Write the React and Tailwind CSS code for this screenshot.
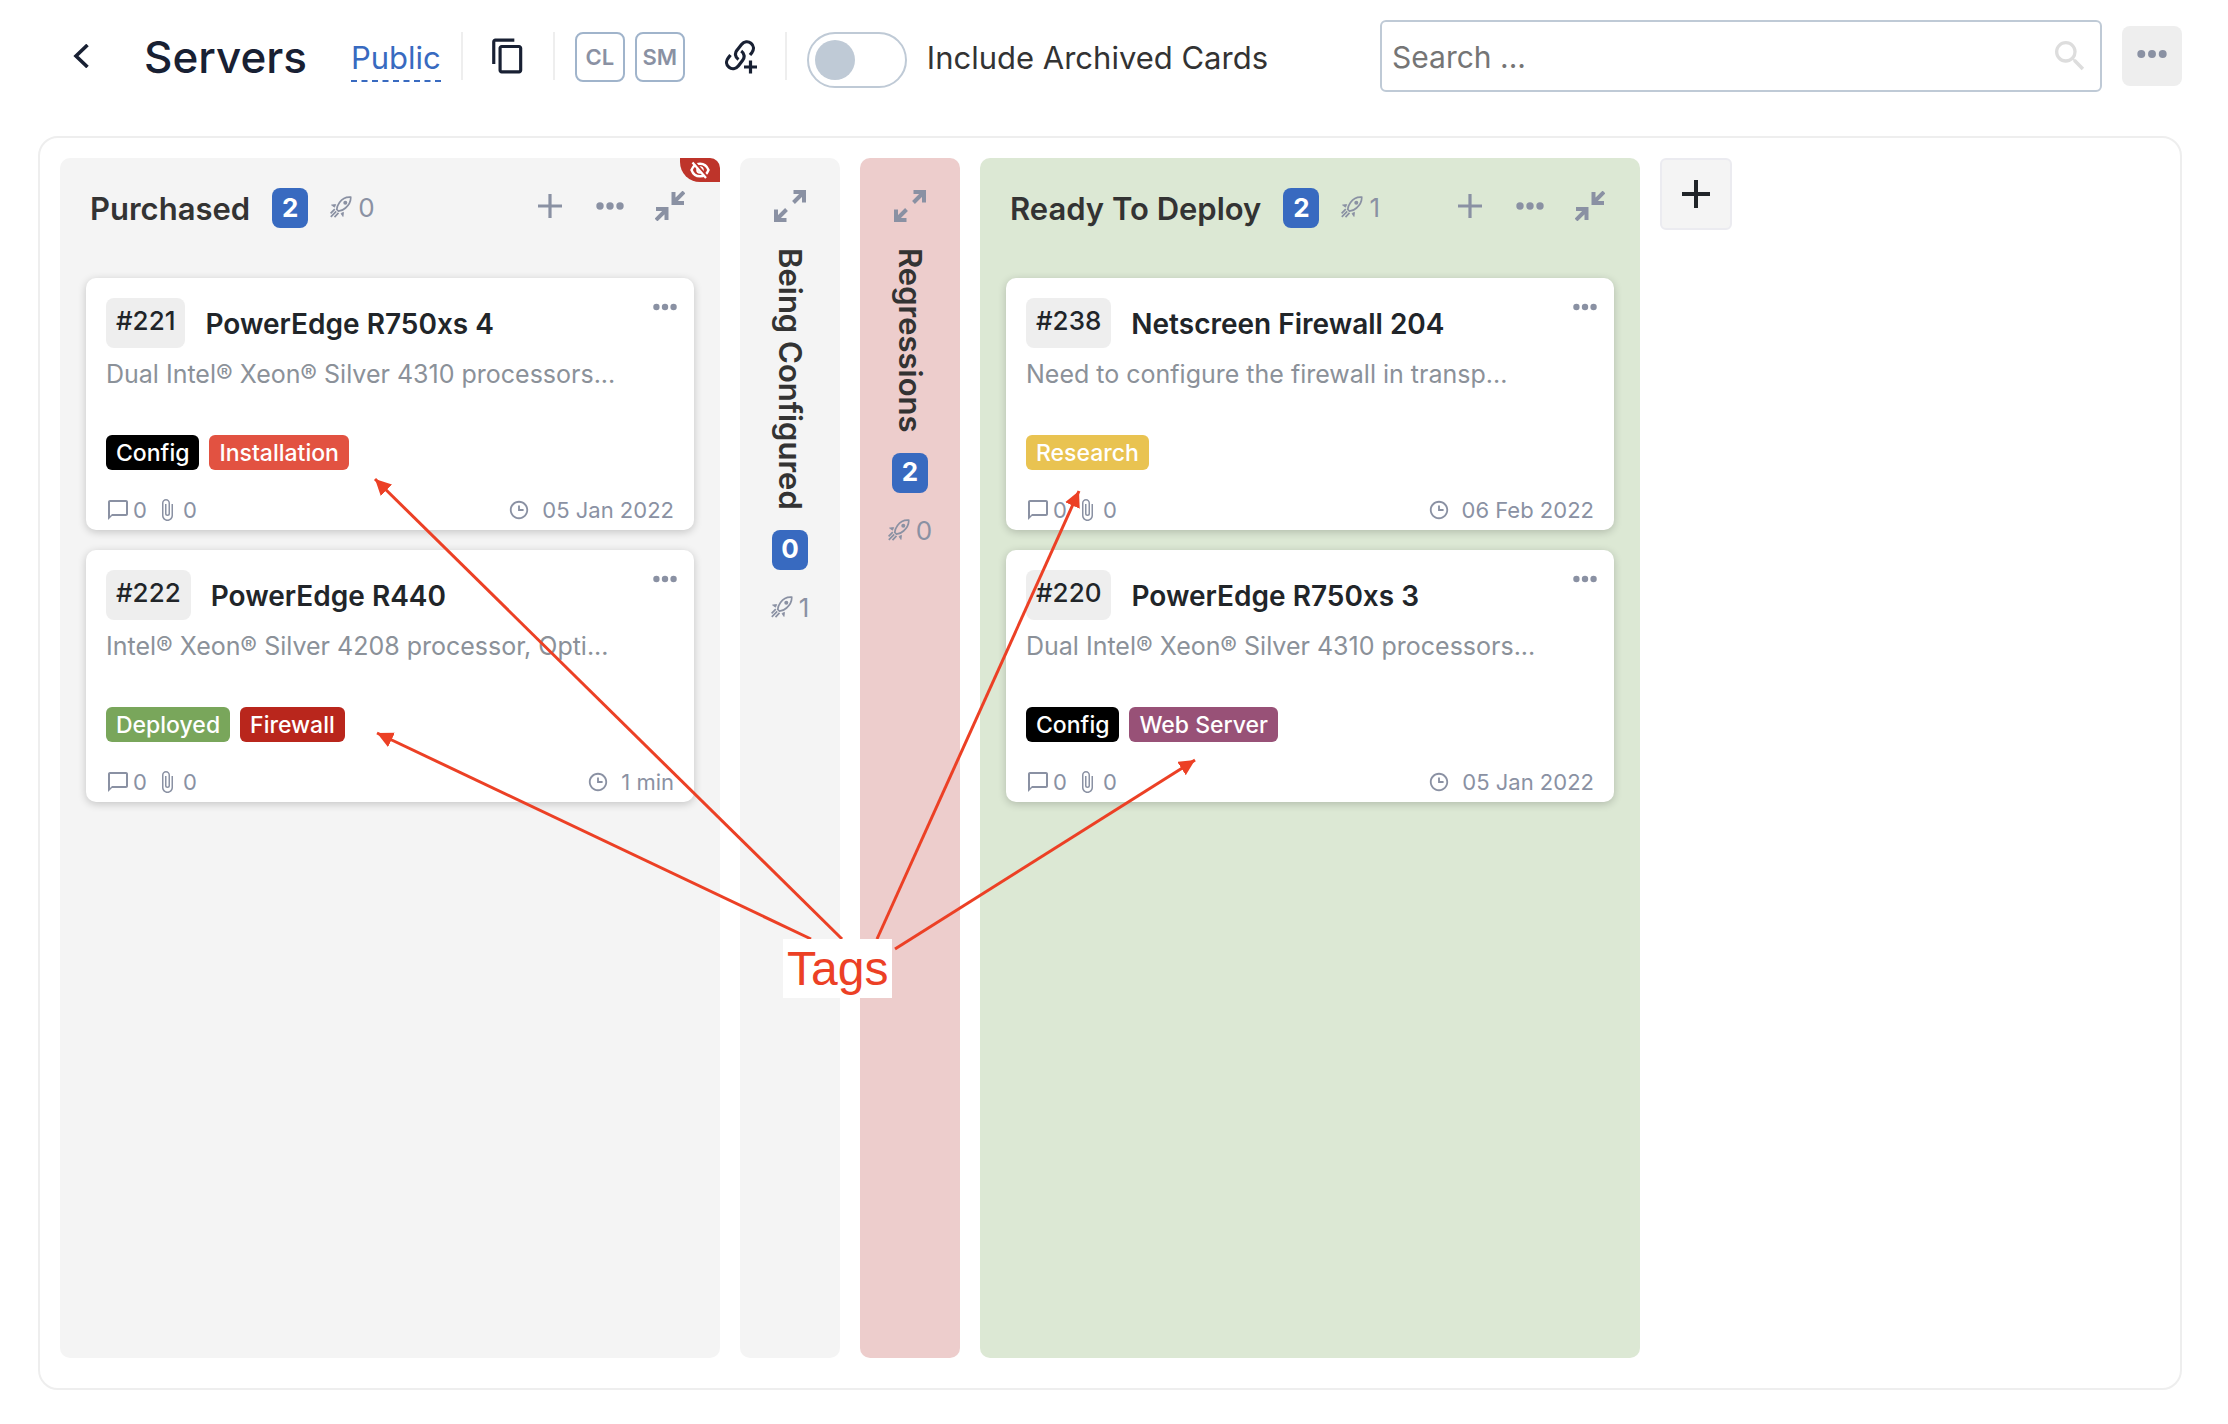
import React from 'react';
import { MdContentCopy, MdChatBubbleOutline, MdAttachFile, MdSearch } from 'react-icons/md';
import { BiTime } from 'react-icons/bi';

const purchased = [
  {
    id: '#221',
    title: 'PowerEdge R750xs 4',
    text: 'Dual Intel® Xeon® Silver 4310 processors...',
    tags: [
      { name: 'Config', color: 'bg-black' },
      { name: 'Installation', color: 'bg-[#e25241]' },
    ],
    date: '05 Jan 2022',
  },
  {
    id: '#222',
    title: 'PowerEdge R440',
    text: 'Intel® Xeon® Silver 4208 processor, Opti...',
    tags: [
      { name: 'Deployed', color: 'bg-[#79a65b]' },
      { name: 'Firewall', color: 'bg-[#b9261c]' },
    ],
    date: '1 min',
  },
];

const ready = [
  {
    id: '#238',
    title: 'Netscreen Firewall 204',
    text: 'Need to configure the firewall in transp...',
    tags: [{ name: 'Research', color: 'bg-[#e9c351]' }],
    date: '06 Feb 2022',
  },
  {
    id: '#220',
    title: 'PowerEdge R750xs 3',
    text: 'Dual Intel® Xeon® Silver 4310 processors...',
    tags: [
      { name: 'Config', color: 'bg-black' },
      { name: 'Web Server', color: 'bg-[#985177]' },
    ],
    date: '05 Jan 2022',
  },
];

const Dots = ({ className }) => (
  <svg viewBox="0 0 28 10" fill="currentColor" className={className}>
    <circle cx="4" cy="5" r="3.7" />
    <circle cx="14" cy="5" r="3.7" />
    <circle cx="24" cy="5" r="3.7" />
  </svg>
);

const Plus = ({ className }) => (
  <svg viewBox="0 0 24 24" stroke="currentColor" strokeWidth="3.2" className={className}>
    <path d="M12 0v24M0 12h24" />
  </svg>
);

const Collapse = ({ className }) => (
  <svg viewBox="0 0 30 30" fill="none" stroke="currentColor" strokeWidth="4" className={className}>
    <path d="M29 1L19 11M18.500 1V12H29M1 29l10-10M11.500 29V18H1" />
  </svg>
);

const Expand = ({ className }) => (
  <svg viewBox="0 0 32 32" fill="none" stroke="currentColor" strokeWidth="4" className={className}>
    <path d="M19.500 12.500L29 3M19.500 2H30v10.500M12.500 19.500L3 29M2 19.500V30h10.500" />
  </svg>
);

const Rocket = ({ className }) => (
  <svg viewBox="0 0 22 22" fill="none" stroke="currentColor" strokeWidth="1.7" className={className}>
    <path d="M20.700 1.200C16 .8 12 3 9.500 6.500 7.700 9 6.700 11 6.800 13.500l1.700 1.700c2.500 0 4.800-1.200 7-3.200 3.700-3.200 5.500-6.500 5.200-10.800z" />
    <path d="M5.700 8.500L1.500 9l3 2.200zM13.500 16.300l-.5 4.200-2-3z" fill="currentColor" strokeWidth="0.8" />
    <path d="M4.800 13.200L.6 17.400M6.200 15.300L.8 20.900M8.500 16.800l-4 4.300" />
    <circle cx="15.300" cy="6.700" r="2" fill="currentColor" stroke="none" />
  </svg>
);

const EyeOff = ({ className }) => (
  <svg viewBox="0 0 20 18" fill="none" stroke="currentColor" strokeWidth="2.4" className={className}>
    <path d="M1.500 9C3 5 6.200 2.700 10 2.700S17 5 18.500 9C17 13 13.800 15.300 10 15.300S3 13 1.500 9z" />
    <circle cx="10" cy="9" r="2.800" strokeWidth="2" />
    <path d="M4.500 1L18 16.500" stroke="#be342a" strokeWidth="2" />
    <path d="M2.500 1.500L16 17" strokeWidth="2.200" />
  </svg>
);

const LinkPlus = ({ className }) => (
  <svg viewBox="0 0 32 34" fill="none" stroke="currentColor" strokeWidth="3.2" className={className}>
    <path d="M13.500 19.500c-3.500-2.500-4-6.500-1.300-9.600l4.300-5.300c2.600-3.200 6.600-3.600 9.500-1.300s3.200 6.300.8 9.400l-1.800 2.200" />
    <path d="M5.500 15l-2.300 2.900c-2.500 3.200-2 7.200.8 9.400s6.800 1.700 9.300-1.400l4.200-5.300c2.600-3.200 2-7.200-1.300-9.600" />
    <path d="M25.500 20.500v13M19 27h13" />
  </svg>
);

const Badge = ({ children }) => (
  <span className="flex h-10 min-w-9 items-center justify-center rounded-lg bg-[#386ac0] px-2 pb-0.5 text-[26px] font-bold text-white">
    {children}
  </span>
);

const RocketCount = ({ count }) => (
  <span className="flex items-center gap-1.5 text-[26px] text-[#8a91a3]">
    <Rocket className="size-[22px]" />
    {count}
  </span>
);

const Card = ({ card }) => (
  <article className="rounded-[10px] bg-white px-5 pt-5 shadow-[0_2px_8px_rgba(0,0,0,0.2)]">
    <div className="flex items-start">
      <span className="h-[50px] rounded-lg bg-[#eee] px-2.5 text-[26px] leading-[46px] font-medium text-[#212529]">{card.id}</span>
      <h3 className="ml-5 flex-1 text-[28px] leading-[52px] font-semibold text-[#212529]">{card.title}</h3>
      <button type="button" aria-label="Card menu" className="mt-1 -mr-[3px] text-[#8a91a3]">
        <Dots className="h-2.5 w-6" />
      </button>
    </div>
    <p className="mt-1 text-[25px] leading-10 whitespace-nowrap text-[#8b9199]">{card.text}</p>
    <div className="mt-[41px] flex gap-2.5">
      {card.tags.map((tag) => (
        <span key={tag.name} className={`${tag.color} h-[35px] rounded-md px-2.5 text-[23px] leading-9 font-medium text-white`}>
          {tag.name}
        </span>
      ))}
    </div>
    <div className="mt-5 flex items-center text-[22px] leading-10 text-[#8a91a3]">
      <MdChatBubbleOutline className="size-6" />
      <span className="ml-[3px]">0</span>
      <MdAttachFile className="ml-2 size-6" />
      <span className="ml-1">0</span>
      <BiTime className="mr-3 ml-auto size-[22px]" />
      <time>{card.date}</time>
    </div>
  </article>
);

const Column = ({ title, count, rockets, color, cards, hiddenMark }) => (
  <section className={`${color} relative w-[660px] shrink-0 rounded-[10px] px-[26px]`}>
    {hiddenMark && (
      <span className="absolute top-0 right-0 flex h-6 w-10 items-center justify-center rounded-tr-[10px] rounded-bl-[20px] bg-[#be342a] text-white">
        <EyeOff className="h-[18px] w-5" />
      </span>
    )}
    <header className="flex h-[120px] items-start pt-[30px] pr-[9px] pl-1">
      <h2 className="mr-[22px] text-[31px] leading-[42px] font-semibold text-[#333]">{title}</h2>
      <Badge>{count}</Badge>
      <div className="ml-[22px] flex h-[38px] items-center">
        <RocketCount count={rockets} />
      </div>
      <div className="ml-auto flex h-9 items-center text-[#8a91a3]">
        <button type="button" aria-label="Add card"><Plus className="size-6" /></button>
        <button type="button" aria-label="List menu" className="ml-[34px]"><Dots className="h-2.5 w-7" /></button>
        <button type="button" aria-label="Collapse list" className="ml-[31px]"><Collapse className="size-[30px]" /></button>
      </div>
    </header>
    <div className="flex flex-col gap-5">
      {cards.map((card) => <Card key={card.id} card={card} />)}
    </div>
  </section>
);

const CollapsedColumn = ({ title, count, rockets, color }) => (
  <section className={`${color} flex w-[100px] shrink-0 flex-col items-center rounded-[10px] pt-8`}>
    <button type="button" aria-label="Expand list" className="text-[#8a91a3]"><Expand className="size-8" /></button>
    <h2 className="mt-[26px] text-[31px] leading-[42px] font-semibold text-[#333] [writing-mode:vertical-rl]">{title}</h2>
    <div className="mt-5"><Badge>{count}</Badge></div>
    <div className="mt-[18px]"><RocketCount count={rockets} /></div>
  </section>
);

const Divider = () => <div className="h-12 w-0.5 bg-[#eee]" />;

const Member = ({ name }) => (
  <button type="button" className="size-[50px] rounded-lg border-2 border-[#a0b4cb] text-[22px] font-semibold text-[#8a91a3]">{name}</button>
);

const Arrow = ({ x1, y1, x2, y2 }) => (
  <line x1={x1} y1={y1} x2={x2} y2={y2} stroke="#ec4025" strokeWidth="3" markerEnd="url(#head)" />
);

const Annotation = () => (
  <>
    <svg className="pointer-events-none absolute top-0 left-0" width="1240" height="1000">
      <defs>
        <marker id="head" markerUnits="userSpaceOnUse" markerWidth="18" markerHeight="18" refX="16" refY="8" orient="auto">
          <path d="M0 0L16 8L0 16z" fill="#ec4025" />
        </marker>
      </defs>
      <Arrow x1={842} y1={939} x2={375} y2={479} />
      <Arrow x1={811} y1={939} x2={377} y2={733} />
      <Arrow x1={877} y1={939} x2={1079} y2={491} />
      <Arrow x1={895} y1={949} x2={1195} y2={760} />
    </svg>
    <span className="absolute top-[939px] left-[783px] bg-white px-1 py-px font-['Liberation_Sans',sans-serif] text-5xl leading-[57px] text-[#ec4025]">
      Tags
    </span>
  </>
);

const App = () => {
  return (
    <div className="relative flex min-h-screen flex-col bg-white font-['Inter',sans-serif]">
      <header className="flex items-start justify-between pr-[46px] pl-[72px]">
        <div className="flex items-start pt-8 text-[#182033]">
          <button type="button" aria-label="Back" className="flex h-12 items-center">
            <svg viewBox="0 0 18 24" fill="none" stroke="currentColor" strokeWidth="3.6" className="h-6 w-[18px]">
              <path d="M15.500 1L4 12l11.500 11" />
            </svg>
          </button>
          <h1 className="ml-[54px] text-[44px] leading-[50px] font-medium">Servers</h1>
          <a href="#public" className="ml-11 h-[50px] border-b-2 border-dashed border-[#386ac0] text-[31px] leading-[52px] text-[#386ac0]">Public</a>
          <div className="ml-5"><Divider /></div>
          <button type="button" aria-label="Copy board" className="ml-[26px] flex h-12 items-center"><MdContentCopy className="size-[38px]" /></button>
          <div className="ml-[26px]"><Divider /></div>
          <div className="ml-5 flex gap-2.5">
            <Member name="CL" />
            <Member name="SM" />
          </div>
          <button type="button" aria-label="Add link" className="ml-10 flex h-[50px] items-center"><LinkPlus className="h-[34px] w-8" /></button>
          <div className="ml-7"><Divider /></div>
          <label className="ml-5 flex items-start gap-5 text-[31px] leading-[52px] text-[#333]">
            <input type="checkbox" className="sr-only" />
            <span className="flex h-14 w-[100px] items-center rounded-full border-2 border-[#bfcad6] px-1.5">
              <span className="size-10 rounded-full bg-[#bfcad6]" />
            </span>
            Include Archived Cards
          </label>
        </div>
        <div className="flex items-center gap-5 pt-5">
          <label className="flex h-[72px] w-[722px] items-center rounded-md border-2 border-[#bfcad6] px-2.5">
            <input type="text" aria-label="Search" placeholder="Search ..." className="flex-1 pt-0.5 text-[30px] outline-none placeholder:text-[#757575]" />
            <MdSearch className="size-10 text-[#ddd]" />
          </label>
          <button type="button" aria-label="Board menu" className="flex size-[60px] items-center justify-center rounded-lg bg-[#eee] pb-1 text-[#8a91a3]">
            <Dots className="h-3 w-[30px]" />
          </button>
        </div>
      </header>

      <main className="mx-[38px] mt-11 mr-[46px] mb-[34px] flex flex-1 gap-5 rounded-[20px] border-2 border-[#eee] px-5 pt-5 pb-[30px]">
        <Column title="Purchased" count={2} rockets={0} color="bg-[#f4f4f4]" cards={purchased} hiddenMark />
        <CollapsedColumn title="Being Configured" count={0} rockets={1} color="bg-[#f4f4f4]" />
        <CollapsedColumn title="Regressions" count={2} rockets={0} color="bg-[#edcdcc]" />
        <Column title="Ready To Deploy" count={2} rockets={1} color="bg-[#dce8d4]" cards={ready} />
        <button type="button" aria-label="Add list" className="flex size-[72px] items-center justify-center rounded-md border-2 border-[#ebebf0] bg-[#f4f4f4] text-[#212529]">
          <svg viewBox="0 0 28 28" stroke="currentColor" strokeWidth="4" className="size-7"><path d="M14 0v28M0 14h28" /></svg>
        </button>
      </main>

      <Annotation />
    </div>
  );
};

export default App;
